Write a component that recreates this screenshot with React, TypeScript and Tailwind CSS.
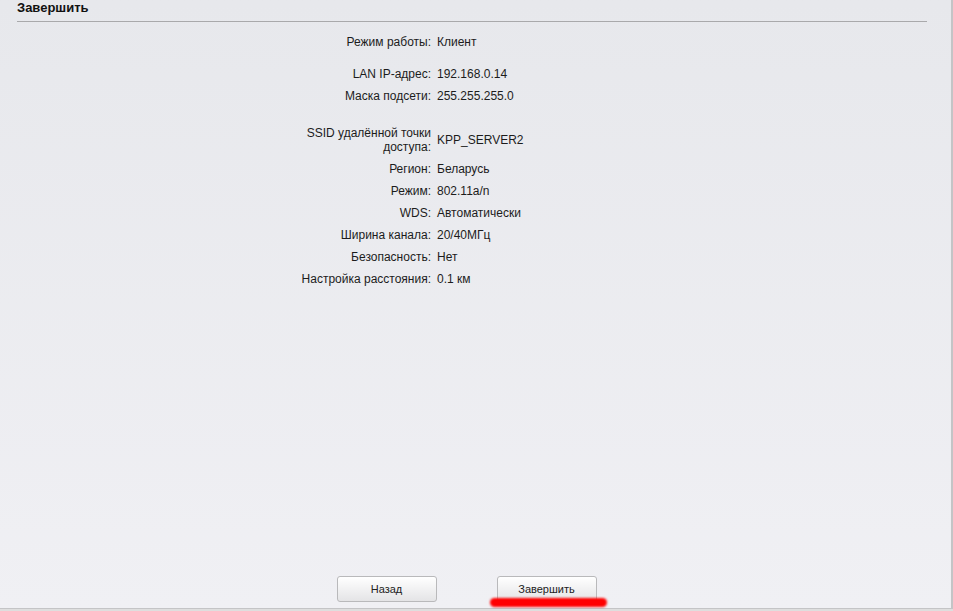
const rows: { label: string; value: string; gap?: string; tall?: boolean }[] = [
  { label: "Режим работы:", value: "Клиент" },
  { label: "LAN IP-адрес:", value: "192.168.0.14", gap: "mt-[10px]" },
  { label: "Маска подсети:", value: "255.255.255.0" },
  { label: "SSID удалённой точки доступа:", value: "KPP_SERVER2", gap: "mt-[15px]", tall: true },
  { label: "Регион:", value: "Беларусь" },
  { label: "Режим:", value: "802.11a/n" },
  { label: "WDS:", value: "Автоматически" },
  { label: "Ширина канала:", value: "20/40МГц" },
  { label: "Безопасность:", value: "Нет" },
  { label: "Настройка расстояния:", value: "0.1 км" },
];

export default function App() {
  return (
    <div
      className="w-[953px] h-[611px] overflow-hidden bg-[#dedede] text-[#1c1c1c]"
      style={{ fontFamily: '"Liberation Sans", Arial, sans-serif' }}
    >
      <div className="w-[953px] h-[609px] flex flex-col border-r-2 border-b border-[#c4c4c6] bg-gradient-to-b from-[#e7e8ec] to-[#f0f0f4]">
        <div className="ml-[17px] mr-[24px] h-[22px] border-b border-[#a9a9ab]">
          <p className="text-[13px] font-bold leading-[16px] text-[#111]">Завершить</p>
        </div>

        <div className="mt-[9px] ml-[301px] flex flex-col text-[12px]">
          {rows.map((r) => (
            <div
              key={r.label}
              className={`flex items-center ${r.tall ? "h-[36px]" : "h-[22px]"} ${r.gap ?? ""}`}
            >
              <div className="w-[130px] text-right leading-[14px]">{r.label}</div>
              <div className="pl-[6px] leading-[14px]">{r.value}</div>
            </div>
          ))}
        </div>

        <div className="flex-1" />

        <div className="flex justify-center gap-[60px] pr-[18px] mb-[6px]">
          <button className="w-[100px] h-[26px] rounded-[3px] border border-[#b9b9bb] bg-gradient-to-b from-[#ffffff] to-[#e4e4e6] text-[11px] text-[#222]">
            Назад
          </button>
          <div className="relative">
            <button className="w-[100px] h-[26px] rounded-[3px] border border-[#b9b9bb] bg-gradient-to-b from-[#ffffff] to-[#e4e4e6] text-[11px] text-[#222]">
              Завершить
            </button>
            <div className="absolute left-[-7px] top-[22px] w-[117px] h-[9px] rounded-full bg-[#ff0000] blur-[1px]" />
          </div>
        </div>
      </div>
    </div>
  );
}
